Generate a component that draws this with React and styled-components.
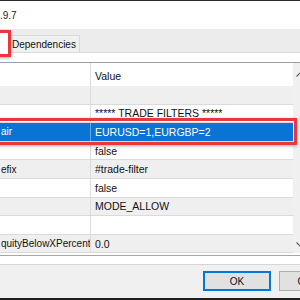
import React from 'react'
import styled, { createGlobalStyle } from 'styled-components'

const rows = [
  { name: '', value: '' },
  { name: '', value: '***** TRADE FILTERS *****' },
  { name: 'air', value: 'EURUSD=1,EURGBP=2', selected: true },
  { name: '', value: 'false' },
  { name: 'efix', value: '#trade-filter' },
  { name: '', value: 'false' },
  { name: '', value: 'MODE_ALLOW' },
  { name: '', value: '' },
  { name: 'quityBelowXPercent', value: '0.0' },
]

const Chevron = ({ down }) => (
  <svg width="8" height="5" viewBox="0 0 8 5">
    <path
      d={down ? 'M0.5 0.5 L4 4 L7.5 0.5' : 'M0.5 4.5 L4 1 L7.5 4.5'}
      fill="none"
      stroke="#606060"
      strokeWidth="1.2"
    />
  </svg>
)

const App = () => (
  <>
    <GlobalStyle />
    <Window>
      <TitleBar>.9.7</TitleBar>
      <TabStrip>
        <ActiveTab>
          <Marker $tab />
        </ActiveTab>
        <Tab>Dependencies</Tab>
      </TabStrip>
      <Panel>
        <Grid>
          <Table>
            <HeaderRow>
              <NameCell />
              <ValueCell $header>Value</ValueCell>
            </HeaderRow>
            {rows.map((row, i) => (
              <Row key={i} $gray={i % 2 === 0} $selected={row.selected}>
                <NameCell $selected={row.selected}>{row.name}</NameCell>
                <ValueCell>{row.value}</ValueCell>
                {row.selected && <Marker />}
              </Row>
            ))}
          </Table>
          <Scrollbar>
            <Chevron />
            <Chevron down />
          </Scrollbar>
        </Grid>
      </Panel>
      <Footer>
        <Button $default>OK</Button>
        <Button>Cancel</Button>
      </Footer>
    </Window>
  </>
)

export default App

const GlobalStyle = createGlobalStyle`
  html, body {
    margin: 0;
    padding: 0;
    width: 300px;
    height: 300px;
    overflow: hidden;
  }
  body {
    font-family: "Liberation Sans", Arial, sans-serif;
    font-size: 10px;
    color: #111;
  }
`
const Window = styled.div`
  width: 300px;
  height: 300px;
  box-sizing: border-box;
  display: flex;
  flex-direction: column;
  background: #f0f0f0;
  border-top: 1px solid #2b2b2b;
  border-bottom: 2px solid #1f1f1f;
  overflow: hidden;
`
const TitleBar = styled.div`
  height: 28px;
  flex: none;
  background: #fff;
  padding: 9px 0 0 0;
  box-sizing: border-box;
  font-size: 10px;
  color: #222;
`
const TabStrip = styled.div`
  height: 24px;
  flex: none;
  display: flex;
  align-items: flex-end;
  background: #ececec;
  border-bottom: 1px solid #d9d9d9;
  box-sizing: border-box;
  position: relative;
  z-index: 2;
`
const ActiveTab = styled.div`
  position: relative;
  width: 10px;
  height: 23px;
  margin-bottom: -1px;
  background: #fff;
  border-right: 1px solid #d9d9d9;
  box-sizing: border-box;
`
const Tab = styled.div`
  height: 17px;
  box-sizing: border-box;
  padding: 3px 3px 0 2px;
  background: #f0f0f0;
  border: 1px solid #d9d9d9;
  border-bottom: none;
  border-left: none;
  color: #111;
`
const Marker = styled.div`
  position: absolute;
  z-index: 5;
  border: 3px solid #e8383d;
  box-shadow: 0 1px 3px rgba(0, 0, 0, 0.35);
  pointer-events: none;
  top: ${p => (p.$tab ? '0' : '-5px')};
  bottom: -4px;
  left: -12px;
  right: ${p => (p.$tab ? '-2px' : '-4px')};
`
const Panel = styled.div`
  height: 212px;
  flex: none;
  background: #fff;
  padding-top: 9px;
  box-sizing: border-box;
  border-bottom: 1px solid #d5d5d5;
`
const Grid = styled.div`
  display: flex;
  height: 194px;
  box-sizing: border-box;
  border-top: 1px solid #9c9cab;
  border-bottom: 1px solid #a6a6a6;
`
const Table = styled.div`
  flex: 1;
  display: flex;
  flex-direction: column;
  background: #fff;
`
const HeaderRow = styled.div`
  display: flex;
  height: 23px;
  flex: none;
  background: #fff;
`
const Row = styled.div`
  position: relative;
  display: flex;
  height: 18.6px;
  flex: none;
  box-sizing: border-box;
  border-bottom: 1px solid #dadada;
  background: ${p => (p.$selected ? '#0a74d4' : p.$gray ? '#efefef' : '#fff')};
  color: ${p => (p.$selected ? '#fff' : '#111')};
`
const NameCell = styled.div`
  width: 91px;
  flex: none;
  box-sizing: border-box;
  padding-left: 1px;
  display: flex;
  align-items: center;
  white-space: nowrap;
  overflow: hidden;
  border-right: 1px solid ${p => (p.$selected ? 'rgba(255,255,255,0.35)' : '#dcdcdc')};
`
const ValueCell = styled.div`
  flex: 1;
  display: flex;
  align-items: center;
  padding-left: 4px;
  padding-top: ${p => (p.$header ? '3px' : '0')};
  font-size: 10.5px;
  white-space: nowrap;
`
const Scrollbar = styled.div`
  width: 7px;
  flex: none;
  height: 190px;
  background: #f0f0f0;
  display: flex;
  flex-direction: column;
  justify-content: space-between;
  padding: 9px 0 6px 3px;
  box-sizing: border-box;
  overflow: hidden;
`
const Footer = styled.div`
  flex: 1;
  display: flex;
  gap: 8px;
  padding: 6px 0 0 203px;
  overflow: hidden;
`
const Button = styled.div`
  width: 68px;
  height: 20px;
  flex: none;
  box-sizing: border-box;
  display: flex;
  align-items: center;
  justify-content: center;
  background: #e1e1e1;
  border: ${p => (p.$default ? '2px solid #0078d7' : '1px solid #adadad')};
  color: #111;
`
